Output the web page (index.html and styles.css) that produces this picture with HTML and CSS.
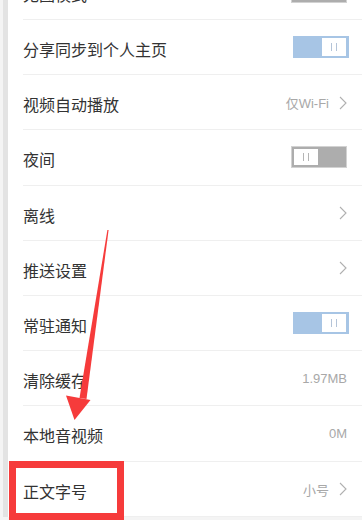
FILE: index.html
```html
<!DOCTYPE html>
<html lang="zh-CN">
<head>
    <meta charset="UTF-8">
    <meta name="viewport" content="width=device-width, initial-scale=1.0">
    <title>设置</title>
    <link rel="stylesheet" href="styles.css">
</head>
<body>
    <div class="screen">
        <div class="panel">
            <ul class="settings">
                <li class="row"><div class="row-inner"><span class="label">无图模式</span><span class="toggle off"><span class="knob"></span></span></div></li>
                <li class="row"><div class="row-inner"><span class="label">分享同步到个人主页</span><span class="toggle on"><span class="knob"></span></span></div></li>
                <li class="row"><div class="row-inner"><span class="label">视频自动播放</span><span class="meta"><span class="value">仅Wi-Fi</span><svg class="chevron" viewBox="0 0 8 14"><polyline points="1,1 7,7 1,13"/></svg></span></div></li>
                <li class="row"><div class="row-inner"><span class="label">夜间</span><span class="toggle off"><span class="knob"></span></span></div></li>
                <li class="row"><div class="row-inner"><span class="label">离线</span><span class="meta"><svg class="chevron" viewBox="0 0 8 14"><polyline points="1,1 7,7 1,13"/></svg></span></div></li>
                <li class="row"><div class="row-inner"><span class="label">推送设置</span><span class="meta"><svg class="chevron" viewBox="0 0 8 14"><polyline points="1,1 7,7 1,13"/></svg></span></div></li>
                <li class="row"><div class="row-inner"><span class="label">常驻通知</span><span class="toggle on"><span class="knob"></span></span></div></li>
                <li class="row"><div class="row-inner"><span class="label">清除缓存</span><span class="meta"><span class="value plain">1.97MB</span></span></div></li>
                <li class="row"><div class="row-inner"><span class="label">本地音视频</span><span class="meta"><span class="value plain">0M</span></span></div></li>
                <li class="row"><div class="row-inner"><span class="label">正文字号</span><span class="meta"><span class="value">小号</span><svg class="chevron" viewBox="0 0 8 14"><polyline points="1,1 7,7 1,13"/></svg></span></div></li>
            </ul>
        </div>

        <!-- annotation drawn over the screenshot -->
        <svg class="arrow" viewBox="0 0 362 520">
            <polygon points="107.4,230 108.6,230 86.5,399 79.5,398"/>
            <polygon points="66,395.5 90.5,400 74.5,420"/>
        </svg>
        <div class="highlight"></div>
    </div>
</body>
</html>
```

FILE: styles.css
```css
html, body {
    margin: 0;
    padding: 0;
}
body {
    background: #ececec;
    font-family: "Noto Sans CJK SC", "Noto Sans", sans-serif;
}
.screen {
    position: relative;
    width: 362px;
    height: 520px;
    overflow: hidden;
    background: #f4f4f4;
}
.panel {
    margin-left: 3px;
    border-left: 5px solid #e3e3e3;
    background: #fff;
    height: 517px;
    overflow: hidden;
}
.settings {
    list-style: none;
    margin: -35.2px 0 0 0;
    padding: 0;
}
.row {
    padding-left: 15px;
}
.row-inner {
    height: 55.2px;
    box-sizing: border-box;
    border-bottom: 1px solid #efefef;
    display: flex;
    align-items: center;
    justify-content: space-between;
    padding-right: 13px;
}
.label {
    font-size: 16px;
    color: #333;
    line-height: 20px;
    padding-top: 4px;
}
.meta {
    display: flex;
    align-items: center;
    padding-right: 2px;
    padding-top: 1px;
}
.value {
    font-family: "Liberation Sans", "Noto Sans CJK SC", sans-serif;
    font-size: 13px;
    color: #a8a8a8;
    margin-right: 10px;
}
.value.plain {
    margin-right: 0;
}
.chevron {
    width: 8px;
    height: 14px;
    fill: none;
    stroke: #b0b0b0;
    stroke-width: 1.1;
}
.toggle {
    width: 56px;
    height: 22px;
    box-sizing: border-box;
    display: flex;
    align-items: center;
    padding: 0 3px 0 2px;
}
.toggle.on {
    background: #a7c5e5;
    justify-content: flex-end;
}
.toggle.off {
    background: #adadad;
    border: 1px solid #d2d2d2;
    justify-content: flex-start;
    margin-right: 2px;
}
.knob {
    width: 24px;
    height: 18px;
    background: #fff;
    position: relative;
}
.toggle.off .knob {
    height: 16px;
}
.knob::before,
.knob::after {
    content: "";
    position: absolute;
    top: 5px;
    width: 1px;
    height: 8px;
    background: #b4c4d8;
}
.toggle.off .knob::before,
.toggle.off .knob::after {
    top: 4px;
    background: #b5b5b5;
}
.knob::before {
    left: 9px;
}
.knob::after {
    left: 14px;
}
.arrow {
    position: absolute;
    left: 0;
    top: 0;
    width: 362px;
    height: 520px;
    fill: #f63b3b;
}
.highlight {
    position: absolute;
    left: 9px;
    top: 461px;
    width: 115px;
    height: 59px;
    box-sizing: border-box;
    border: 7px solid #f63b3b;
}
```
